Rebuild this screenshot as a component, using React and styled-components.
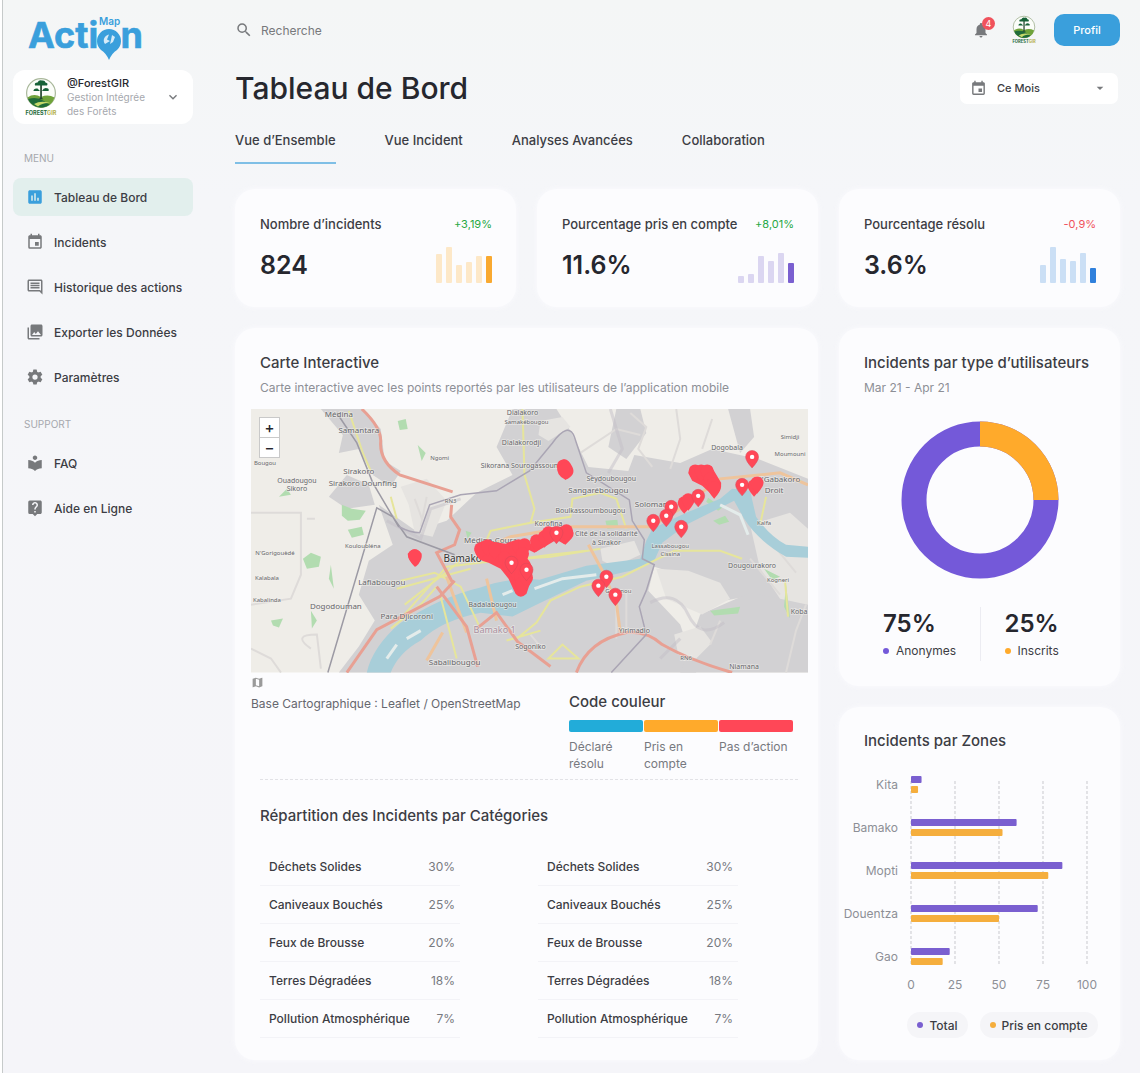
import React from "react";
import styled, { createGlobalStyle } from "styled-components";
import {
  MdInsertChart,
  MdEvent,
  MdOutlineComment,
  MdPhotoLibrary,
  MdLocalLibrary,
  MdLiveHelp,
  MdSearch,
  MdNotifications,
  MdArrowDropDown,
  MdKeyboardArrowDown,
  MdMap,
} from "react-icons/md";

const c = {
  ink: "#26272e",
  text: "#3c3d44",
  muted: "#8d8f96",
  faint: "#a6a8ae",
  icon: "#77797c",
  blue: "#3a9fdc",
  violet: "#7459d9",
  violetBar: "#7a5fd0",
  orange: "#ffaa2b",
  amber: "#f5ae3d",
  red: "#ff4757",
  card: "#fcfcfe",
};

const GlobalStyle = createGlobalStyle`
  *, *::before, *::after { box-sizing: border-box; }
  body {
    margin: 0;
    background: #ffffff;
    color: ${c.ink};
    font-family: Inter, "Noto Sans", "Liberation Sans", sans-serif;
  }
  h1, h2, p, ul, dl, dd, dt { margin: 0; padding: 0; }
  ul { list-style: none; }
  a { color: inherit; text-decoration: none; }
  button, input, select { font-family: inherit; color: inherit; }
`;

const Page = styled.div`
  display: grid;
  grid-template-columns: 180px minmax(0, 1fr);
  gap: 42px;
  min-height: 100vh;
  margin-left: 2px;
  padding: 0 20px 12px 10px;
  border-left: 1px solid #c6caca;
  background: linear-gradient(180deg, #f4f6f6 0, #f5f6f9 200px, #f5f5f9 100%);
`;

const Sidebar = styled.aside`
  display: flex;
  flex-direction: column;
  padding-top: 14px;
`;

const LogoLink = styled.a`
  display: block;
  padding-left: 14px;
  svg { display: block; }
`;

const Account = styled.button`
  display: flex;
  align-items: center;
  gap: 10px;
  height: 54px;
  margin: 8px 0 0;
  padding: 0 12px;
  border: 0;
  border-radius: 12px;
  background: #ffffff;
  text-align: left;
  cursor: pointer;
`;

const AccountText = styled.span`
  flex: 1;
  font-size: 10px;
  line-height: 14px;
  color: ${c.faint};
`;

const AccountName = styled.span`
  display: block;
  font-size: 11px;
  font-weight: 500;
  color: ${c.ink};
`;

const NavHeading = styled.h2`
  margin-top: ${(p) => (p.$first ? 26 : 20)}px;
  margin-bottom: 12px;
  padding-left: 11px;
  font-size: 10px;
  line-height: 16px;
  font-weight: 400;
  color: ${c.faint};
`;

const NavList = styled.ul`
  display: flex;
  flex-direction: column;
  gap: 7px;
`;

const NavLink = styled.a`
  display: flex;
  align-items: center;
  gap: 10px;
  height: 38px;
  padding-left: 13px;
  border-radius: 8px;
  background: ${(p) => (p.$active ? "#e2efed" : "transparent")};
  font-size: 12px;
  font-weight: 500;
  color: ${c.text};
  white-space: nowrap;
  svg { color: ${(p) => (p.$active ? c.blue : c.icon)}; }
`;

const Main = styled.main`
  min-width: 0;
  padding-top: 14px;
`;

const TopBar = styled.header`
  display: flex;
  align-items: center;
  height: 32px;
`;

const Search = styled.label`
  display: flex;
  flex: 1;
  align-items: center;
  gap: 8px;
  color: ${c.icon};
`;

const SearchInput = styled.input`
  flex: 1;
  min-width: 0;
  padding: 0;
  border: 0;
  outline: 0;
  background: transparent;
  font-size: 12px;
  &::placeholder { color: #77797c; opacity: 1; }
`;

const BellButton = styled.button`
  position: relative;
  display: flex;
  padding: 0;
  border: 0;
  background: transparent;
  color: ${c.icon};
  cursor: pointer;
`;

const BellCount = styled.span`
  position: absolute;
  top: -4px;
  right: -5px;
  width: 13px;
  height: 13px;
  border-radius: 50%;
  background: #f0525c;
  color: #ffffff;
  font-size: 9px;
  line-height: 13px;
  text-align: center;
`;

const Avatar = styled.a`
  display: flex;
  margin: 0 18px 0 22px;
`;

const ProfileButton = styled.button`
  width: 66px;
  height: 32px;
  padding: 0;
  border: 0;
  border-radius: 10px;
  background: ${c.blue};
  color: #ffffff;
  font-size: 11px;
  font-weight: 500;
  cursor: pointer;
`;

const TitleRow = styled.div`
  display: flex;
  align-items: center;
  justify-content: space-between;
  margin-top: 22px;
  padding-right: 2px;
`;

const Title = styled.h1`
  font-size: 30px;
  line-height: 40px;
  font-weight: 500;
`;

const Period = styled.label`
  display: grid;
  grid-template-columns: 10px 16px 1fr 16px 10px;
  align-items: center;
  width: 158px;
  height: 31px;
  border-radius: 7px;
  background: #ffffff;
  color: ${c.icon};
  svg:first-of-type { grid-area: 1 / 2; }
  svg:last-of-type { grid-area: 1 / 4; pointer-events: none; }
`;

const PeriodSelect = styled.select`
  grid-area: 1 / 1 / 2 / 6;
  height: 31px;
  padding: 0 26px 0 37px;
  border: 0;
  outline: 0;
  appearance: none;
  background: transparent;
  color: ${c.text};
  font-size: 11px;
  font-weight: 500;
`;

const Tabs = styled.nav`
  display: flex;
  gap: 49px;
  margin-top: 22px;
`;

const Tab = styled.a`
  height: 34px;
  border-bottom: 2px solid ${(p) => (p.$active ? "#7fbfe6" : "transparent")};
  font-size: 13px;
  line-height: 20px;
  font-weight: 500;
  color: ${c.text};
`;

const Board = styled.div`
  display: grid;
  grid-template-columns: repeat(3, minmax(0, 1fr));
  gap: 21px;
  margin-top: 25px;
`;

const Card = styled.section`
  border-radius: 20px;
  background: ${c.card};
  box-shadow: 0 0 6px rgba(252, 252, 255, 0.9);
`;

const StatCard = styled(Card)`
  padding: 24px 24px 22px 25px;
`;

const StatHead = styled.div`
  display: flex;
  justify-content: space-between;
  line-height: 22px;
  white-space: nowrap;
`;

const StatLabel = styled.h2`
  font-size: 13px;
  font-weight: 500;
  color: ${c.text};
`;

const StatDelta = styled.span`
  font-size: 11px;
  color: ${(p) => (p.$up ? "#27a844" : "#f0525c")};
`;

const StatBody = styled.div`
  display: flex;
  align-items: center;
  justify-content: space-between;
  height: 40px;
  margin-top: 10px;
`;

const StatValue = styled.p`
  font-size: 25px;
  font-weight: 600;
`;

const MiniBars = styled.div`
  display: flex;
  align-items: flex-end;
  gap: 4px;
  height: 36px;
`;

const MiniBar = styled.span`
  width: 6px;
  border-radius: 1px;
  background: ${(p) => p.$color};
`;

const MapCard = styled(Card)`
  grid-column: span 2;
  padding: 23px 10px 22px 16px;
`;

const CardHead = styled.div`
  padding-left: ${(p) => (p.$inset ? 9 : 25)}px;
`;

const CardTitle = styled.h2`
  font-size: 15px;
  line-height: 24px;
  font-weight: 500;
  color: ${c.text};
`;

const CardNote = styled.p`
  margin-top: 4px;
  font-size: 12px;
  line-height: 18px;
  color: ${c.muted};
`;

const MapFrame = styled.div`
  position: relative;
  margin-top: 12px;
  > svg { display: block; width: 100%; height: auto; }
`;

const ZoomControl = styled.div`
  position: absolute;
  top: 8px;
  left: 8px;
  display: grid;
  border: 1px solid #c9c9c9;
  background: #c9c9c9;
  gap: 1px;
`;

const ZoomButton = styled.button`
  width: 19px;
  height: 19px;
  padding: 0;
  border: 0;
  background: #ffffff;
  font-size: 15px;
  line-height: 19px;
  font-weight: 500;
  cursor: pointer;
`;

const MapFoot = styled.div`
  display: flex;
  justify-content: space-between;
  padding: 3px 15px 7px 0;
  > div:first-child > svg { display: block; color: #9a9a9a; }
`;

const MapSource = styled.p`
  margin-top: 5px;
  font-size: 12px;
  line-height: 20px;
  color: #66676e;
`;

const Legend = styled.div`
  width: 224px;
  padding-top: 14px;
`;

const LegendTitle = styled.h2`
  font-size: 15px;
  line-height: 24px;
  font-weight: 500;
  color: ${c.text};
`;

const LegendScale = styled.ul`
  display: grid;
  grid-template-columns: repeat(3, 1fr);
  gap: 1px;
  margin-top: 6px;
  font-size: 12px;
  line-height: 17px;
  color: #77797f;
`;

const LegendItem = styled.li`
  &::before {
    content: "";
    display: block;
    height: 12px;
    margin-bottom: 6px;
    border-radius: 2px;
    background: ${(p) => p.$color};
  }
  span { display: block; max-width: ${(p) => (p.$wide ? "none" : "56px")}; }
`;

const Divider = styled.hr`
  margin: 0 10px 24px 9px;
  border: 0;
  border-top: 1px dashed #e2e2e6;
`;

const Tables = styled.div`
  display: flex;
  gap: 78px;
  margin-top: 20px;
  padding-left: 9px;
`;

const Table = styled.table`
  width: 200px;
  border-collapse: collapse;
  font-size: 12px;
  th, td {
    height: 38px;
    padding: 0;
    border-bottom: 1px solid #f3f3f7;
    white-space: nowrap;
  }
  th { padding-left: 9px; text-align: left; font-weight: 500; color: ${c.text}; }
  td { padding-right: 5px; text-align: right; color: #77797f; }
`;

const SideColumn = styled.div`
  display: flex;
  flex-direction: column;
  gap: 21px;
`;

const DonutCard = styled(Card)`
  padding: 23px 0 25px;
`;

const Donut = styled.svg`
  display: block;
  width: 158px;
  margin: 24px auto 28px;
`;

const Shares = styled.dl`
  display: grid;
  grid-template-columns: 1fr 1fr;
`;

const Share = styled.div`
  display: flex;
  flex-direction: column-reverse;
  padding-left: ${(p) => (p.$second ? 24 : 44)}px;
  border-left: ${(p) => (p.$second ? "1px solid #ececf2" : "0")};
  dt {
    display: flex;
    align-items: center;
    gap: 7px;
    font-size: 12px;
    line-height: 20px;
    color: ${c.text};
  }
  dd { font-size: 24px; line-height: 34px; font-weight: 600; }
`;

const Dot = styled.span`
  width: 6px;
  height: 6px;
  border-radius: 50%;
  background: ${(p) => p.$color};
`;

const ZoneCard = styled(Card)`
  flex: 1;
  padding: 22px 0 20px;
`;

const ZoneChart = styled.svg`
  display: block;
  width: 100%;
  margin-top: 16px;
  font-size: 12px;
  fill: ${c.muted};
`;

const ZoneLegend = styled.ul`
  display: flex;
  justify-content: center;
  gap: 12px;
  margin-top: 15px;
  padding-left: 46px;
`;

const Pill = styled.li`
  display: flex;
  align-items: center;
  gap: 6px;
  height: 26px;
  padding: 0 10px;
  border-radius: 13px;
  background: #f5f5f8;
  font-size: 12px;
  font-weight: 500;
  color: ${c.text};
  white-space: nowrap;
`;

function ActionMapLogo() {
  return (
    <svg width="118" height="48" viewBox="0 0 118 48" role="img" aria-label="Action Map" fill={c.blue}>
      <g fontSize="36" fontWeight="700" stroke={c.blue} strokeWidth="0.6">
        <text x="1" y="34">Acti</text>
        <text x="116" y="34" textAnchor="end">n</text>
      </g>
      <path d="M82 46Q79 39 74 36A12 12 0 1 1 90 36Q85 39 82 46Z" />
      <path d="M78 30c-3-4 0-9 4-9.500l-2 5 3 1.500ZM85 21l3 2-2 5-3 2 1-4Z" fill="#d6ebf8" />
      <text x="72" y="11" fontSize="10" fontWeight="600">Map</text>
    </svg>
  );
}

function GearIcon({ size }) {
  const teeth = [0, 60, 120, 180, 240, 300];
  return (
    <svg width={size} height={size} viewBox="0 0 24 24" aria-hidden="true">
      <circle cx="12" cy="12" r="5.500" fill="none" stroke="currentColor" strokeWidth="4" />
      {teeth.map((angle) => (
        <path key={angle} d="M9.800 2h4.400l1 4.500H8.800Z" fill="currentColor" transform={`rotate(${angle} 12 12)`} />
      ))}
    </svg>
  );
}

function ForestLogo({ size }) {
  return (
    <svg width={size} height={size * 1.25} viewBox="0 0 32 40" role="img" aria-label="ForestGIR">
      <circle cx="16" cy="16" r="14.4" fill="#fbfdf9" stroke="#a9b89b" strokeWidth="1.2" />
      <path d="M2.5 20.5Q9 16 16 20Q23 17 29.5 20.5A14 14 0 0 1 2.5 20.5Z" fill="#6fa33a" />
      <path d="M3 22Q12 19 19 24Q25 28 24.500 27.500A14 14 0 0 1 3 22Z" fill="#1f6b3a" />
      <path d="M9 27Q16 23 25 26Q17 25.500 13 29.500Z" fill="#c5d86a" />
      <path d="M15.200 8h1.700v13l1.600 1.200h-5l1.700-1.200Z" fill="#23482f" />
      <path d="M10 8.500q-1-3 2.500-3Q14 2.500 17 3.500q3-.5 3.500 2 3 .5 1.500 3Z" fill="#176238" />
      <path d="M8.500 14q0-3 4-2.500l2.500 2.500ZM17 14q2-4 5-2.800 2.500.5 1.500 2.800Z" fill="#176238" />
      <text x="16" y="37.500" fontSize="5.500" fontWeight="700" textAnchor="middle" fill="#1f6b3a">
        FOREST<tspan fill="#b5b04c">GIR</tspan>
      </text>
    </svg>
  );
}

const urban = [
  "M70 0L112 0 130 20 134 52 150 62 140 78 122 66 108 40 88 44 92 26Z",
  "M96 66L118 76 124 96 96 100 78 88Z",
  "M128 96L165 122 196 112 226 84 262 66 246 38 262 0 306 0 320 22 338 58 378 62 384 46 430 54 462 40 508 50 558 70 558 200 506 186 474 192 430 166 404 158 398 182 430 216 446 264 88 264 108 238 124 212 108 186 118 152 142 136Z",
  "M450 206L500 184 558 196 558 264 430 264Z",
  "M366 0L390 0 396 24 376 50 358 38Z",
  "M478 0L500 0 504 28 490 44Z",
];

const hills = [
  "M150 78L176 70 196 92 182 128 164 124 158 96Z",
  "M350 140L384 132 390 146 364 158 352 152Z",
  "M406 160L438 162 470 174 480 190 452 206 416 190Z",
  "M424 226L450 218 462 234 446 250 428 246Z",
  "M290 12L312 8 320 18 298 32 288 26Z",
  "M500 116L540 104 558 120 558 196 530 190 510 160Z",
];

const greens = [
  "M91 96l10 4 14 2-6 9-12 1-6-5Z",
  "M97 121l14-3 2 8-12 3Z",
  "M52 150l8-6 10 4-2 10-12 2Z",
  "M20 212l12-2-4 9-6-2Z",
  "M80 156l3 24-5-10Z",
  "M167 36l8 8-4 8Z",
  "M147 12l8-2 2 10-8 1Z",
  "M60 202l6 10-5 8Z",
  "M28 88l8-8 4 6Z",
  "M355 112l12-1 1 8-11 1Z",
  "M463 112l12-5 4 6-10 3Z",
  "M460 202l30-4-2 7-24 2Z",
  "M536 176l4 34-6-12Z",
  "M514 160l16 8-8 3Z",
  "M458 89l14 10-4 3-12-9Z",
  "M215 122l6 2-4 6Z",
];

const yellowRoads = [
  "M98 2L112 44 120 62M140 88L146 110",
  "M150 210L196 158 246 152 300 148 350 140",
  "M154 196L210 152M146 180L220 160M140 220L170 196 186 178",
  "M150 172L184 164 210 178 228 216",
  "M228 150L240 122 280 114 284 100 274 66 272 0",
  "M280 114L320 108 322 90 350 84 366 90 376 120",
  "M270 150L300 146 336 142",
  "M264 232L286 214 300 192 330 178 372 168 404 152 424 142 470 142 492 150",
  "M298 250L312 236 328 250Z",
  "M190 188L206 250M256 232L290 222",
  "M516 88L510 116M535 172L538 208",
];

const orangeRoads = [
  "M232 140L260 128 320 118 400 118 430 100 470 70 530 64 558 76",
  "M338 136L352 162 366 194 370 224",
  "M196 168L216 224M192 224L176 252M236 170L246 212",
];

const redRoads = [
  "M111 0Q130 18 130 32Q128 52 149 66L202 83",
  "M201 96L200 108 209 121 204 136 186 144 202 174",
  "M96 264L126 221 189 188 204 172",
  "M186 178L216 218 227 258",
  "M226 220L246 204 267 233 300 258",
  "M326 264Q338 232 376 224Q396 222 412 236Q440 252 482 264",
];

const places = [
  [88, 8, "Médina"], [108, 24, "Samantara"], [108, 65, "Sirakoro"], [112, 77, "Sirakoro Dounfing"],
  [46, 74, "Ouadougou", 7], [46, 82, "Sikoro", 7], [14, 56, "Bougou", 6], [189, 51, "Ngomi", 6], [112, 139, "Kouloubléna", 6],
  [24, 146, "N'Gorigouèdé", 6], [16, 171, "Kalabala", 6], [16, 193, "Kabalinda", 6],
  [131, 176, "Lafiabougou"], [85, 200, "Dogodouman"], [156, 210, "Para Djicoroni"],
  [204, 256, "Sabalibougou"], [280, 240, "Sogoniko", 7], [242, 198, "Badalabougou", 7],
  [244, 224, "Bamako 1", 9, "#a98fa0"], [240, 134, "Médina-Coura"], [212, 153, "Bamako", 10, "#333333"],
  [272, 6, "Dialakoro", 7], [276, 15, "Samakébougou", 6], [271, 36, "Dialakorodji", 7],
  [270, 59, "Sikorana Sourogassoum", 7], [361, 72, "Seydoubougou", 7],
  [348, 84, "Sangarébougou"], [340, 104, "Boulkassoumbougou", 7], [298, 117, "Korofina", 7],
  [356, 127, "Cité de la solidarité", 7], [356, 136, "à Sirakor", 7], [402, 98, "Solomani"],
  [420, 139, "Lassabougou", 6], [420, 147, "Cissina", 6], [368, 184, "Gouanou", 6],
  [384, 224, "Yirimadio", 7], [436, 251, "RN6", 6], [200, 94, "RN3", 6], [494, 260, "Niamana", 7],
  [477, 41, "Dogobala", 7], [540, 30, "Simidji", 6], [540, 47, "Moumouni", 6],
  [528, 73, "N'Gabakoro"], [524, 84, "Droit", 8], [514, 116, "Kalfa", 6], [502, 159, "Dougourakoro", 7],
  [528, 173, "Kogneri", 6], [549, 205, "Koba", 7],
];

// Areas where the pins are too dense to be told apart.
const pinClusters = [
  "M224 142Q226 132 236 132L255 135Q266 129 279 133L277 150Q284 158 281 170L276 185Q270 191 265 185L258 170 250 160 238 154Q226 152 224 142Z",
  "M276 140L285 129 296 119 310 118 320 119Q326 124 321 130L315 136 306 131 296 137 284 144Z",
  "M438 64Q440 56 450 58L461 57 471 74Q472 82 464 88L452 77 442 72Z",
  "M307 56Q315 44 322 58Q326 66 315 71Q305 66 307 56Z",
  "M157 145Q164 136 171 145Q172 152 165 158Q157 152 157 145Z",
];

const solidPins = [
  [164, 148], [230, 141], [237, 138], [244, 141], [254, 150], [258, 156], [264, 162], [270, 168],
  [274, 163], [271, 176], [276, 170], [268, 138], [274, 137], [272, 146], [286, 133], [294, 129], [298, 125],
  [313, 125], [316, 123], [313, 58], [315, 61], [445, 63], [451, 63], [457, 63],
  [460, 71], [463, 76], [464, 80], [434, 95], [438, 92], [504, 78], [507, 75],
];

const openPins = [
  [502, 49], [492, 77], [448, 88], [421, 99], [416, 108], [403, 113], [431, 119], [356, 169], [348, 178], [365, 187],
  [306, 125], [276, 162], [261, 155],
];

const pinShape = "M0 10Q-6.500 3-6.500-1A6.500 6.500 0 0 1 6.500-1Q6.500 3 0 10Z";

function BamakoMap() {
  return (
    <svg viewBox="0 0 558 264" role="img" aria-label="Carte de Bamako" fontFamily='"Noto Sans", sans-serif'>
      <rect width="558" height="264" fill="#efede8" />
      <g fill="#d2d1d3">
        {urban.map((d) => <path key={d} d={d} />)}
      </g>
      <g fill="#e6e4e1">
        {hills.map((d) => <path key={d} d={d} />)}
      </g>
      <g fill="none" stroke="#dedbd9" strokeWidth="2">
        <path d="M0 104H50V166L40 190 0 196M56 110H64M60 240Q40 226 66 226L70 260M0 240L20 250 30 264" />
        <path d="M380 4L396 18 388 40 402 58M420 60L430 30 426 0M452 40L462 10M330 44L366 20 390 26M164 90L172 112M176 88L170 118" />
        <path d="M536 264L546 222 556 196M500 150L530 186M510 120L546 164M366 190V230M376 184V222M290 238L280 226M460 236L470 212" />
      </g>
      <g fill="none" stroke="#c4bfc8" strokeWidth="3" opacity="0.5">
        <path d="M136 112L170 130 180 100 210 90M360 0L372 40 358 64M400 194Q426 180 438 206T474 214M410 250L430 230" />
      </g>
      <g fill="#b2dcb0">
        {greens.map((d) => <path key={d} d={d} />)}
      </g>
      <path
        d="M116 264Q122 238 149 215Q190 188 229 179Q262 168 289 171L336 157 390 150 396 132 402 120 436 104 470 90 482 80 500 82 506 108Q520 128 536 136L558 138V149L536 148Q508 132 494 110L484 92 468 100 436 116 412 134 404 152 380 162 336 172 290 194 262 208 230 204Q190 212 170 232Q148 244 140 264Z"
        fill="#a8ced9"
      />
      <g fill="none" stroke="#e4eceb" strokeWidth="3">
        <path d="M284 180L312 170 346 166M252 186L262 182M136 250L146 236M156 230L170 222M470 96L490 106 498 126" />
      </g>
      <g fill="none" stroke="#e6e59b" strokeWidth="2">
        {yellowRoads.map((d) => <path key={d} d={d} />)}
      </g>
      <g fill="none" stroke="#eec49c" strokeWidth="3">
        {orangeRoads.map((d) => <path key={d} d={d} />)}
      </g>
      <g fill="none" stroke="#e8a093" strokeWidth="3">
        {redRoads.map((d) => <path key={d} d={d} />)}
      </g>
      <g fill="none" stroke="#9c9aa4" strokeWidth="1.500">
        <path d="M77 264L126 99 142 108 156 128 204 146M86 4L106 34 122 74 148 118" />
        <path d="M148 118Q160 124 169 124L179 96 210 86 246 82 279 62 302 34Q318 12 324 28L336 64 379 91 382 112 394 131 392 150 404 156 396 182 389 198 396 226 361 264" stroke="#aaa5b4" />
      </g>
      <g textAnchor="middle" stroke="#f3f1ee" strokeWidth="1.500" strokeOpacity="0.6" paintOrder="stroke">
        {places.map(([x, y, name, size = 8, color = "#66666a"]) => (
          <text key={name} x={x} y={y} fontSize={size} fill={color}>{name}</text>
        ))}
      </g>
      <g fill={c.red}>
        {pinClusters.map((d) => <path key={d} d={d} />)}
        {solidPins.map(([x, y]) => <path key={`${x}-${y}`} d={pinShape} transform={`translate(${x} ${y})`} />)}
        {openPins.map(([x, y]) => (
          <g key={`${x}-${y}`} transform={`translate(${x} ${y})`}>
            <path d={pinShape} stroke="#d9485a" strokeWidth="0.500" />
            <circle cy="-1" r="2.200" fill="#ffffff" />
          </g>
        ))}
      </g>
    </svg>
  );
}

const menu = [
  { label: "Tableau de Bord", Icon: MdInsertChart, active: true },
  { label: "Incidents", Icon: MdEvent },
  { label: "Historique des actions", Icon: MdOutlineComment },
  { label: "Exporter les Données", Icon: MdPhotoLibrary },
  { label: "Paramètres", Icon: GearIcon },
];

const support = [
  { label: "FAQ", Icon: MdLocalLibrary },
  { label: "Aide en Ligne", Icon: MdLiveHelp },
];

const stats = [
  { label: "Nombre d’incidents", value: "824", delta: "+3,19%", up: true, bars: [29, 36, 18, 21, 27, 27], tint: "#fde8c8", solid: "#f9a930" },
  { label: "Pourcentage pris en compte", value: "11.6%", delta: "+8,01%", up: true, bars: [7, 9, 27, 22, 30, 20], tint: "#dbd6f1", solid: c.violetBar },
  { label: "Pourcentage résolu", value: "3.6%", delta: "-0,9%", up: false, bars: [18, 36, 24, 22, 30, 15], tint: "#cbdff5", solid: "#2f80dc" },
];

const categories = [
  ["Déchets Solides", "30%"],
  ["Caniveaux Bouchés", "25%"],
  ["Feux de Brousse", "20%"],
  ["Terres Dégradées", "18%"],
  ["Pollution Atmosphérique", "7%"],
];

const zones = [
  ["Kita", 6, 4],
  ["Bamako", 60, 52],
  ["Mopti", 86, 78],
  ["Douentza", 72, 50],
  ["Gao", 22, 18],
];

function NavItems({ items }) {
  return (
    <NavList>
      {items.map(({ label, Icon, active }) => (
        <li key={label}>
          <NavLink href="#" $active={active} aria-current={active ? "page" : undefined}>
            <Icon size={18} />
            {label}
          </NavLink>
        </li>
      ))}
    </NavList>
  );
}

function CategoryTable() {
  return (
    <Table>
      <tbody>
        {categories.map(([name, share]) => (
          <tr key={name}>
            <th scope="row">{name}</th>
            <td>{share}</td>
          </tr>
        ))}
      </tbody>
    </Table>
  );
}

function ZonesChart() {
  const scale = (v) => (v * 176) / 100;
  return (
    <ZoneChart viewBox="0 0 281 228" role="img" aria-label="Incidents par zones">
      {[0, 25, 50, 75, 100].map((tick) => (
        <g key={tick}>
          <line x1={72 + scale(tick)} x2={72 + scale(tick)} y1="12" y2="197" stroke="#c9c9ce" strokeDasharray="3 2" />
          <text x={72 + scale(tick)} y="220" textAnchor="middle">{tick}</text>
        </g>
      ))}
      {zones.map(([name, total, handled], i) => (
        <g key={name} transform={`translate(0 ${7 + i * 43})`}>
          <text x="59" y="13" textAnchor="end">{name}</text>
          <rect x="72" y="0" width={scale(total)} height="7" rx="1" fill={c.violetBar} />
          <rect x="72" y="10" width={scale(handled)} height="7" rx="1" fill={c.amber} />
        </g>
      ))}
    </ZoneChart>
  );
}

export default function App() {
  return (
    <>
      <GlobalStyle />
      <Page>
        <Sidebar>
          <LogoLink href="#"><ActionMapLogo /></LogoLink>
          <Account type="button">
            <ForestLogo size={32} />
            <AccountText>
              <AccountName>@ForestGIR</AccountName>
              Gestion Intégrée des Forêts
            </AccountText>
            <MdKeyboardArrowDown size={16} color={c.icon} />
          </Account>
          <NavHeading $first>MENU</NavHeading>
          <NavItems items={menu} />
          <NavHeading>SUPPORT</NavHeading>
          <NavItems items={support} />
        </Sidebar>

        <Main>
          <TopBar>
            <Search>
              <MdSearch size={18} />
              <SearchInput type="search" placeholder="Recherche" aria-label="Recherche" />
            </Search>
            <BellButton type="button" aria-label="Notifications">
              <MdNotifications size={18} />
              <BellCount>4</BellCount>
            </BellButton>
            <Avatar href="#"><ForestLogo size={24} /></Avatar>
            <ProfileButton type="button">Profil</ProfileButton>
          </TopBar>

          <TitleRow>
            <Title>Tableau de Bord</Title>
            <Period>
              <MdEvent size={17} />
              <PeriodSelect aria-label="Période" defaultValue="mois">
                <option value="mois">Ce Mois</option>
                <option value="annee">Cette Année</option>
              </PeriodSelect>
              <MdArrowDropDown size={16} />
            </Period>
          </TitleRow>

          <Tabs>
            <Tab href="#" $active>Vue d’Ensemble</Tab>
            <Tab href="#">Vue Incident</Tab>
            <Tab href="#">Analyses Avancées</Tab>
            <Tab href="#">Collaboration</Tab>
          </Tabs>

          <Board>
            {stats.map((s) => (
              <StatCard key={s.label}>
                <StatHead>
                  <StatLabel>{s.label}</StatLabel>
                  <StatDelta $up={s.up}>{s.delta}</StatDelta>
                </StatHead>
                <StatBody>
                  <StatValue>{s.value}</StatValue>
                  <MiniBars>
                    {s.bars.map((h, i) => (
                      <MiniBar key={i} $color={i === 5 ? s.solid : s.tint} style={{ height: h }} />
                    ))}
                  </MiniBars>
                </StatBody>
              </StatCard>
            ))}

            <MapCard>
              <CardHead $inset>
                <CardTitle>Carte Interactive</CardTitle>
                <CardNote>Carte interactive avec les points reportés par les utilisateurs de l’application mobile</CardNote>
              </CardHead>
              <MapFrame>
                <BamakoMap />
                <ZoomControl>
                  <ZoomButton type="button" aria-label="Zoom avant">+</ZoomButton>
                  <ZoomButton type="button" aria-label="Zoom arrière">−</ZoomButton>
                </ZoomControl>
              </MapFrame>
              <MapFoot>
                <div>
                  <MdMap size={13} />
                  <MapSource>Base Cartographique : Leaflet / OpenStreetMap</MapSource>
                </div>
                <Legend>
                  <LegendTitle>Code couleur</LegendTitle>
                  <LegendScale>
                    <LegendItem $color="#22acd9"><span>Déclaré résolu</span></LegendItem>
                    <LegendItem $color={c.orange}><span>Pris en compte</span></LegendItem>
                    <LegendItem $color={c.red} $wide><span>Pas d’action</span></LegendItem>
                  </LegendScale>
                </Legend>
              </MapFoot>
              <Divider />
              <CardHead $inset>
                <CardTitle>Répartition des Incidents par Catégories</CardTitle>
              </CardHead>
              <Tables>
                <CategoryTable />
                <CategoryTable />
              </Tables>
            </MapCard>

            <SideColumn>
              <DonutCard>
                <CardHead>
                  <CardTitle>Incidents par type d’utilisateurs</CardTitle>
                  <CardNote>Mar 21 - Apr 21</CardNote>
                </CardHead>
                <Donut viewBox="0 0 158 158" role="img" aria-label="75% anonymes, 25% inscrits">
                  <circle cx="79" cy="79" r="66" fill="none" stroke={c.violet} strokeWidth="25" />
                  <path d="M79 13A66 66 0 0 1 145 79" fill="none" stroke={c.orange} strokeWidth="25" />
                </Donut>
                <Shares>
                  <Share>
                    <dt><Dot $color={c.violet} />Anonymes</dt>
                    <dd>75%</dd>
                  </Share>
                  <Share $second>
                    <dt><Dot $color={c.orange} />Inscrits</dt>
                    <dd>25%</dd>
                  </Share>
                </Shares>
              </DonutCard>

              <ZoneCard>
                <CardHead>
                  <CardTitle>Incidents par Zones</CardTitle>
                </CardHead>
                <ZonesChart />
                <ZoneLegend>
                  <Pill><Dot $color={c.violetBar} />Total</Pill>
                  <Pill><Dot $color={c.amber} />Pris en compte</Pill>
                </ZoneLegend>
              </ZoneCard>
            </SideColumn>
          </Board>
        </Main>
      </Page>
    </>
  );
}
